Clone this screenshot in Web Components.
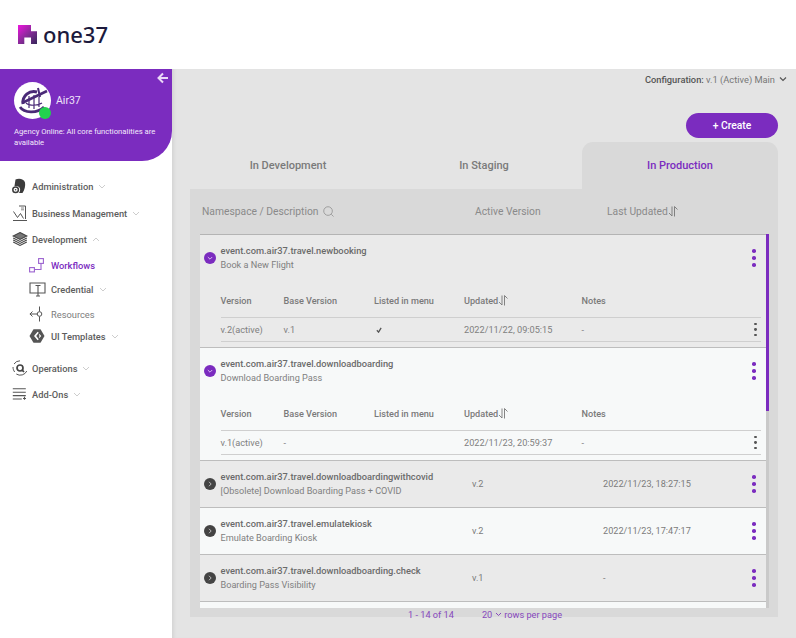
<!DOCTYPE html>
<html>
<head>
<meta charset="utf-8">
<title>one37</title>
<style>
  html, body { margin: 0; height: 100%; }
  body { width: 796px; height: 638px; overflow: hidden; font-family: Roboto, "Liberation Sans", sans-serif; }
</style>
</head>
<body>
<app-shell>
  <brand-header slot="header"></brand-header>
  <side-nav slot="nav">
    <nav-item label="Administration" icon="admin" arrow="down" gap="18"></nav-item>
    <nav-item label="Business Management" icon="business" arrow="down" gap="13"></nav-item>
    <nav-item label="Development" icon="dev" arrow="up" gap="12"></nav-item>
    <nav-item label="Workflows" icon="workflows" sub active gap="12"></nav-item>
    <nav-item label="Credential" icon="credential" sub arrow="down" gap="10"></nav-item>
    <nav-item label="Resources" icon="resources" sub light gap="11"></nav-item>
    <nav-item label="UI Templates" icon="templates" sub arrow="down" gap="8"></nav-item>
    <nav-item label="Operations" icon="ops" arrow="down" gap="18"></nav-item>
    <nav-item label="Add-Ons" icon="addons" arrow="down" gap="12"></nav-item>
  </side-nav>
  <flow-board slot="main">
    <flow-row expanded name="event.com.air37.travel.newbooking" desc="Book a New Flight" tone="grey" version="v.2(active)" base="v.1" listed="yes" updated="2022/11/22, 09:05:15"></flow-row>
    <flow-row expanded name="event.com.air37.travel.downloadboarding" desc="Download Boarding Pass" tone="white" version="v.1(active)" base="-" updated="2022/11/23, 20:59:37"></flow-row>
    <flow-row name="event.com.air37.travel.downloadboardingwithcovid" desc="[Obsolete] Download Boarding Pass + COVID" tone="grey" version="v.2" updated="2022/11/23, 18:27:15"></flow-row>
    <flow-row name="event.com.air37.travel.emulatekiosk" desc="Emulate Boarding Kiosk" tone="white" version="v.2" updated="2022/11/23, 17:47:17"></flow-row>
    <flow-row name="event.com.air37.travel.downloadboarding.check" desc="Boarding Pass Visibility" tone="grey" version="v.1" updated="-"></flow-row>
    <flow-row tone="white"></flow-row>
  </flow-board>
</app-shell>

<script>
const PURPLE = '#7b2cbf';

const NAV_ICONS = {
  admin: `<svg width="14" height="16" viewBox="0 0 14 16"><path fill="#3c3c3c" d="M3.500 1.500C6.500 0 12 .5 13 4.500c.6 3-.3 7.500-2.500 10.500H6.800c1-1 1.500-2.500 1.300-4C7.700 8.700 5.500 7.500 2.500 8z"/><circle cx="3.600" cy="11.800" r="2.800" fill="none" stroke="#3c3c3c" stroke-width="1.500"/><circle cx="3.600" cy="11.800" r=".8" fill="#3c3c3c"/></svg>`,
  business: `<svg width="16" height="17" viewBox="0 0 16 17" fill="none" stroke="#555" stroke-width="1"><path d="M1 15.500h14"/><path d="M1.500 6.500l4 6 3-4 3 5"/><path d="M7 1h6.500v13"/><path d="M9 3h3M9 4.800h3" stroke="#888"/></svg>`,
  dev: `<svg width="16" height="14" viewBox="0 0 16 14" fill="none" stroke="#444" stroke-width="1.100"><path d="M8 .6L14.800 4 8 7.400 1.200 4z" fill="#777"/><path d="M1.200 6L8 9.400 14.800 6"/><path d="M1.200 8L8 11.400 14.800 8"/><path d="M1.200 10L8 13.400 14.800 10"/></svg>`,
  workflows: `<svg width="15" height="15" viewBox="0 0 15 15" fill="none" stroke="#9b62cf" stroke-width="1.100"><rect x=".6" y="9.600" width="4.800" height="4.300"/><rect x="9.600" y=".6" width="4.800" height="4.800"/><path d="M5.500 11.500h6.500V5.500"/></svg>`,
  credential: `<svg width="17" height="15" viewBox="0 0 17 15" fill="none" stroke="#555" stroke-width="1.100"><path d="M1 1h15v10H1z"/><path d="M6.500 3.500h5M9 3.500V14M7 14h4"/></svg>`,
  resources: `<svg width="14" height="16" viewBox="0 0 14 16" fill="none" stroke="#555" stroke-width="1"><path d="M.8 8h8"/><path d="M3.500 5.500L1 8l2.500 2.500"/><circle cx="10.500" cy="8" r="2.300"/><path d="M10.500 .5v5M10.500 10.500v5"/></svg>`,
  templates: `<svg width="16" height="14" viewBox="0 0 16 14"><path fill="#555" d="M4.500.3h7L15.500 7l-4 6.700h-7L.5 7z"/><path fill="#fff" d="M8.600 2.800L5 7l3.600 4.200 1.200-1L7.200 7l2.600-3.200z"/><path fill="#fff" d="M10.500 5l1.700 2-1.700 2-.7-.9L10.800 7 9.800 5.900z"/></svg>`,
  ops: `<svg width="16" height="16" viewBox="0 0 16 16" fill="none" stroke="#444"><path d="M2 4a7.200 7.200 0 0 1 6-3.200" stroke-width=".9"/><path d="M14.800 11a7.200 7.200 0 0 1-10.500 3" stroke-width=".9"/><path d="M1 7c0 2 .6 3.600 1.700 5" stroke-width=".9"/><circle cx="8" cy="8" r="3" stroke-width="1.700"/><path d="M10.200 10.200l1.800 1.800" stroke-width="1.700"/></svg>`,
  addons: `<svg width="15" height="12" viewBox="0 0 15 12" fill="none" stroke="#555" stroke-width="1.100"><path d="M.8 .8h13M.8 4.200h13M.8 7.600h13M.8 11h9M12.500 8.800v3M11 10.500h3"/></svg>`
};

class AppShell extends HTMLElement {
  constructor() {
    super();
    this.attachShadow({ mode: 'open' });
    this.shadowRoot.innerHTML = `
      <style>
        :host { display: grid; grid-template-rows: 69px 569px; grid-template-columns: 172px 624px; width: 796px; height: 638px; background: #e4e4e4; }
        .top { grid-column: 1 / 3; background: #fff; }
        .nav { background: #fff; }
      </style>
      <div class="top"><slot name="header"></slot></div>
      <div class="nav"><slot name="nav"></slot></div>
      <div><slot name="main"></slot></div>
    `;
  }
}

class BrandHeader extends HTMLElement {
  constructor() {
    super();
    this.attachShadow({ mode: 'open' });
    this.shadowRoot.innerHTML = `
      <style>
        :host { display: flex; align-items: center; gap: 6px; height: 69px; padding: 0 0 0 18px; box-sizing: border-box; }
        span { font: 500 22px/1 "Noto Sans", Lato, sans-serif; color: #1c1a3d; position: relative; top: -1px; }
        svg { display: block; }
      </style>
      <svg width="19" height="19" viewBox="0 0 19 19">
        <defs>
          <linearGradient id="g" x1="0" y1="0" x2="1" y2="1">
            <stop offset="0" stop-color="#ee14de"/><stop offset=".5" stop-color="#8a2a9a"/><stop offset="1" stop-color="#35285a"/>
          </linearGradient>
        </defs>
        <path fill="url(#g)" d="M0 0h13v6.300h6V19h-6v-6.400H6.300V19H0z"/>
      </svg>
      <span>one37</span>
    `;
  }
}

class SideNav extends HTMLElement {
  constructor() {
    super();
    this.attachShadow({ mode: 'open' });
    this.shadowRoot.innerHTML = `
      <style>
        :host { display: block; height: 569px; }
        .card { position: relative; height: 92px; background: ${PURPLE}; border-bottom-right-radius: 30px; color: #fff; padding: 13px 14px 0; box-sizing: border-box; }
        .back { position: absolute; right: 3px; top: 3px; }
        .who { display: flex; align-items: center; gap: 5px; }
        .avatar { position: relative; width: 37px; height: 37px; border-radius: 50%; background: #fff; }
        .avatar svg { display: block; }
        .dot { position: absolute; right: 0; bottom: 0; width: 12px; height: 12px; border-radius: 50%; background: #22d24f; }
        .name { font-size: 10.500px; color: #f0e4fa; }
        .status { margin: 7px -6px 0 0; font-size: 7.700px; line-height: 11px; color: #f3e9fb; }
      </style>
      <div class="card">
        <svg class="back" width="12" height="12" viewBox="0 0 12 12" fill="none" stroke="#ead9f7" stroke-width="2"><path d="M11 6H2M6 1.500L1.500 6 6 10.500"/></svg>
        <div class="who">
          <div class="avatar">
            <svg width="37" height="37" viewBox="0 0 37 37" fill="none" stroke="#4a2a77">
              <path d="M9 22a11 11 0 0 1 14-12" stroke-width="3"/>
              <path d="M6 25c4 6 17 7 24 0" stroke-width="2.800"/>
              <path d="M12 21c3 3 12 3 16 0M15 14v12M20 13v14M25 15v10" stroke-width="1.200"/>
              <path d="M8 21L33 9" stroke-width="2.500"/>
              <path d="M24 6l2 9" stroke-width="2"/>
            </svg>
            <div class="dot"></div>
          </div>
          <span class="name">Air37</span>
        </div>
        <p class="status">Agency Online: All core functionalities are available</p>
      </div>
      <slot></slot>
    `;
  }
}

class NavItem extends HTMLElement {
  constructor() {
    super();
    this.attachShadow({ mode: 'open' });
    const sub = this.hasAttribute('sub');
    const arrow = this.getAttribute('arrow');
    const path = arrow === 'up' ? 'M1 4L4 1 7 4' : 'M1 1L4 4 7 1';
    this.shadowRoot.innerHTML = `
      <style>
        :host { display: flex; align-items: center; height: 14px; margin-top: ${this.getAttribute('gap') || 0}px; padding-left: ${sub ? 29 : 12}px; font-size: 9.300px; font-weight: 500; color: #5d5d5d; white-space: nowrap; }
        :host([active]) { color: ${PURPLE}; }
        :host([light]) { color: #7c7c7c; font-weight: 400; }
        .ico { display: flex; width: ${sub ? 22 : 20}px; flex: none; align-items: center; }
        .arr { margin-left: 5px; }
      </style>
      <span class="ico">${NAV_ICONS[this.getAttribute('icon')]}</span>
      <span>${this.getAttribute('label')}</span>
      ${arrow ? `<svg class="arr" width="8" height="5" viewBox="0 0 8 5" fill="none" stroke="#cdcdcd"><path d="${path}"/></svg>` : ''}
    `;
  }
}

class FlowBoard extends HTMLElement {
  constructor() {
    super();
    this.attachShadow({ mode: 'open' });
    this.shadowRoot.innerHTML = `
      <style>
        :host { display: block; height: 569px; padding: 0 18px; box-sizing: border-box; color: #777; box-shadow: inset 4px 0 3px -2px #d4d4d4; }
        .config { display: flex; justify-content: flex-end; align-items: center; height: 20px; font-size: 9.300px; margin-right: -9px; gap: 4px; color: #777; }
        .config b { font-weight: 500; color: #555; }
        .actions { display: flex; justify-content: flex-end; margin-top: 24px; }
        button { width: 92px; height: 25px; border: 0; border-radius: 13px; background: ${PURPLE}; color: #fff; font: 500 10.300px Roboto, sans-serif; padding: 0; }
        .tabs { display: grid; grid-template-columns: repeat(3, 196px); margin-top: 4px; height: 47px; }
        .tab { display: flex; align-items: center; justify-content: center; font-size: 11px; font-weight: 500; color: #7a7a7a; border-radius: 11px 11px 0 0; }
        .tab.on { background: #d9d9d9; color: ${PURPLE}; }
        .panel { position: relative; height: 428px; background: #d9d9d9; padding: 0 10px; box-sizing: border-box; }
        .heads { height: 45px; display: grid; grid-template-columns: 273px 132px 1fr; align-items: center; margin: 0 -10px 0 2px; font-size: 10.300px; color: #8a8a8a; padding-bottom: 1px; box-sizing: border-box; }
        .heads span { display: inline-flex; align-items: center; gap: 5px; }
        .list { height: 374px; width: 566px; overflow: hidden; border-top: 1px solid #b4b4b4; box-sizing: border-box; }
        .track { position: absolute; left: 576px; top: 45px; width: 3px; height: 374px; background: #c9c9c9; }
        .thumb { width: 2.500px; height: 177px; background: ${PURPLE}; }
        .pager { position: absolute; left: 218px; top: 419px; display: flex; align-items: center; font-size: 9.200px; color: #8748bd; height: 12px; }
        .pager .n { margin-left: 28px; }
        .pager svg { margin: 0 2.500px; }
      </style>
      <div class="config"><span><b>Configuration:</b> v.1 (Active) Main</span>
        <svg width="8" height="6" viewBox="0 0 8 6" fill="none" stroke="#555" stroke-width="1.200"><path d="M1 1.500L4 4.500 7 1.500"/></svg></div>
      <div class="actions"><button>+ Create</button></div>
      <div class="tabs">
        <div class="tab">In Development</div>
        <div class="tab">In Staging</div>
        <div class="tab on">In Production</div>
      </div>
      <div class="panel">
        <div class="heads">
          <span>Namespace / Description
            <svg width="11" height="11" viewBox="0 0 12 12" fill="none" stroke="#999"><circle cx="5.500" cy="5.500" r="4.700"/><path d="M9 9l2.500 2.500"/></svg></span>
          <span>Active Version</span>
          <span style="gap:0">Last Updated<sort-mark></sort-mark></span>
        </div>
        <div class="list"><slot></slot></div>
        <div class="track"><div class="thumb"></div></div>
        <div class="pager"><span>1 - 14 of 14</span><span class="n">20</span>
          <svg width="7" height="5" viewBox="0 0 7 5" fill="none" stroke="#8748bd"><path d="M1 1l2.500 2.500L6 1"/></svg><span>rows per page</span></div>
      </div>
    `;
  }
}

class SortMark extends HTMLElement {
  constructor() {
    super();
    this.attachShadow({ mode: 'open' });
    this.shadowRoot.innerHTML = `
      <style>:host { display: inline-flex; }</style>
      <svg width="11" height="11" viewBox="0 0 11 11" fill="none" stroke="#777" stroke-width=".9"><path d="M4 .5v9.500L1 7"/><path d="M6.500 10.500V.5l3 3"/></svg>
    `;
  }
}

class KebabMenu extends HTMLElement {
  constructor() {
    super();
    this.attachShadow({ mode: 'open' });
    this.shadowRoot.innerHTML = `
      <style>
        :host { display: flex; flex-direction: column; align-items: center; gap: var(--gap, 3.200px); width: 4px; }
        i { display: block; width: var(--size, 3.600px); height: var(--size, 3.600px); border-radius: 50%; background: var(--dot, ${PURPLE}); }
      </style>
      <i></i><i></i><i></i>
    `;
  }
}

class FlowRow extends HTMLElement {
  constructor() {
    super();
    this.attachShadow({ mode: 'open' });
    const a = n => this.getAttribute(n) || '';
    const open = this.hasAttribute('expanded');
    const toggle = open
      ? `<svg width="12" height="12" viewBox="0 0 12 12"><circle cx="6" cy="6" r="6" fill="${PURPLE}"/><path d="M3.800 5l2.200 2.200L8.200 5" fill="none" stroke="#d6b8ef"/></svg>`
      : `<svg width="12" height="12" viewBox="0 0 12 12"><circle cx="6" cy="6" r="6" fill="#444"/><path d="M5 3.800L7.200 6 5 8.200" fill="none" stroke="#bbb"/></svg>`;
    const title = `<div class="tt"><div class="nm">${a('name')}</div><div class="ds">${a('desc')}</div></div>`;
    let body = '';
    if (open) {
      body = `
        <div class="top">
          <span class="tg">${toggle}</span>${title}
          <kebab-menu class="km"></kebab-menu>
        </div>
        <div class="tbl">
          <div class="tr th"><span>Version</span><span>Base Version</span><span>Listed in menu</span><span class="up">Updated<sort-mark></sort-mark></span><span>Notes</span><span></span></div>
          <div class="tr td"><span>${a('version')}</span><span>${a('base')}</span><span>${this.hasAttribute('listed') ? '<svg width="6" height="6" viewBox="0 0 7 7" fill="none" stroke="#555" stroke-width="1.500" style="margin-left:1.500px"><path d="M1 3.800L3 6l3-5"/></svg>' : ''}</span><span>${a('updated')}</span><span>-</span><kebab-menu class="small"></kebab-menu></div>
        </div>`;
    } else if (a('name')) {
      body = `
        <div class="one">
          <span class="tg">${toggle}</span>${title}
          <span class="v">${a('version')}</span><span class="v">${a('updated')}</span>
          <kebab-menu class="km"></kebab-menu>
        </div>`;
    }
    this.shadowRoot.innerHTML = `
      <style>
        :host { display: block; box-sizing: border-box; border-bottom: 1px solid #bdbdbd; font-size: 9.150px; color: #7b7b7b; height: ${open ? 113 : 47}px; background: ${a('tone') === 'white' ? '#f7f9f9' : '#eaeaea'}; }
        .tg { display: flex; width: 12px; margin-left: 4px; margin-right: 4.500px; flex: none; }
        .tt { line-height: 14px; }
        .nm { font-weight: 500; color: #6a6a6a; font-size: 9.300px; white-space: nowrap; }
        .ds { color: #808080; }
        .top { display: flex; align-items: center; height: 46px; }
        .top .km { margin-left: auto; margin-right: 10px; }
        .one { display: grid; grid-template-columns: 20.500px 251.500px 131px 1fr 4px; align-items: center; height: 46px; padding-right: 10px; box-sizing: border-box; }
        .one .tg { margin-right: 0; }
        .tbl { margin: 0 5px 0 20.500px; }
        .tr { display: grid; grid-template-columns: 63px 90.500px 90px 117.500px 172px 4px; align-items: center; }
        .th { height: 37px; padding-top: 3px; box-sizing: border-box; font-weight: 500; color: #7a7a7a; border-bottom: 1px solid #cfcfcf; }
        .td { height: 23px; border-bottom: 1px solid #cfcfcf; color: #808080; font-size: 9.200px; }
        .up { display: inline-flex; align-items: center; }
        .small { --dot: #555; --size: 2.800px; --gap: 2.800px; }
      </style>
      ${body}
    `;
  }
}

customElements.define('app-shell', AppShell);
customElements.define('brand-header', BrandHeader);
customElements.define('side-nav', SideNav);
customElements.define('nav-item', NavItem);
customElements.define('flow-board', FlowBoard);
customElements.define('sort-mark', SortMark);
customElements.define('kebab-menu', KebabMenu);
customElements.define('flow-row', FlowRow);
</script>
</body>
</html>
